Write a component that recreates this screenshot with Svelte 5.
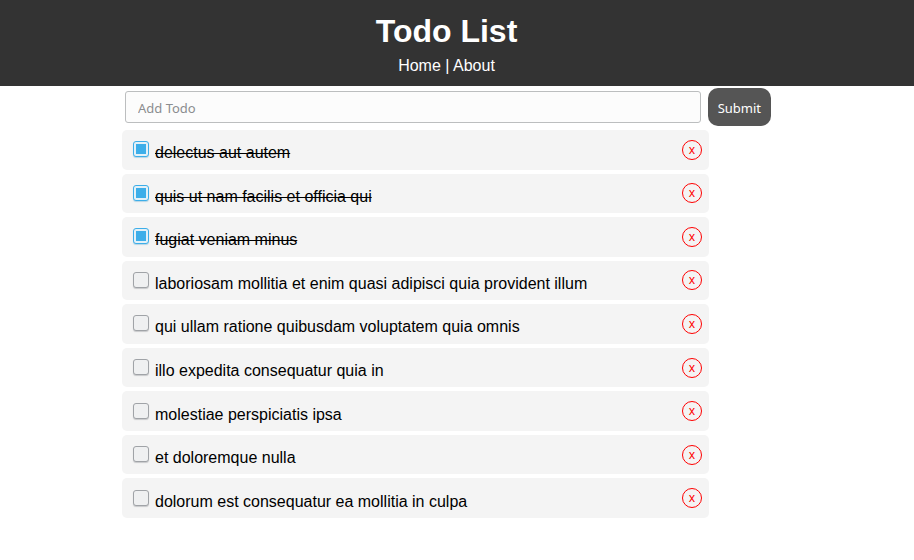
<script>
  let title = $state('');
  let nextId = 10;
  let todos = $state([
    { id: 1, title: 'delectus aut autem', completed: true },
    { id: 2, title: 'quis ut nam facilis et officia qui', completed: true },
    { id: 3, title: 'fugiat veniam minus', completed: true },
    { id: 4, title: 'laboriosam mollitia et enim quasi adipisci quia provident illum', completed: false },
    { id: 5, title: 'qui ullam ratione quibusdam voluptatem quia omnis', completed: false },
    { id: 6, title: 'illo expedita consequatur quia in', completed: false },
    { id: 7, title: 'molestiae perspiciatis ipsa', completed: false },
    { id: 8, title: 'et doloremque nulla', completed: false },
    { id: 9, title: 'dolorum est consequatur ea mollitia in culpa', completed: false }
  ]);

  function addTodo(event) {
    event.preventDefault();
    const text = title.trim();
    if (!text) return;
    todos.push({ id: nextId++, title: text, completed: false });
    title = '';
  }

  function removeTodo(id) {
    todos = todos.filter((todo) => todo.id !== id);
  }
</script>

<header>
  <h1>Todo List</h1>
  <nav><a href="#home">Home</a> | <a href="#about">About</a></nav>
</header>

<main>
  <form onsubmit={addTodo}>
    <input class="title" type="text" placeholder="Add Todo" aria-label="Add Todo" bind:value={title} />
    <button class="submit" type="submit">Submit</button>
  </form>

  <ul>
    {#each todos as todo (todo.id)}
      <li>
        <label class:done={todo.completed}>
          <input type="checkbox" bind:checked={todo.completed} />
          <span>{todo.title}</span>
        </label>
        <button class="remove" type="button" aria-label="x, delete {todo.title}" onclick={() => removeTodo(todo.id)}>x</button>
      </li>
    {/each}
  </ul>
</main>

<style>
  :global(body) {
    margin: 0;
    background: #fff;
    color: #000;
    font: 16px/22px "Liberation Sans", Arial, sans-serif;
  }

  header {
    padding: 8px 31px 8px 10px;
    background: #333;
    color: #fff;
    text-align: center;
  }

  h1 {
    margin: 0;
    font-size: 32px;
    line-height: 46px;
  }

  nav {
    line-height: 24px;
  }

  nav a {
    color: #fff;
    text-decoration: none;
  }

  main {
    max-width: 670px;
    margin: 0 auto;
  }

  form {
    display: flex;
    align-items: center;
    gap: 7px;
    padding: 2px 21px 4px 3px;
  }

  .title {
    flex: 1;
    min-width: 0;
    box-sizing: border-box;
    height: 32px;
    padding: 2px 12px 0;
    border: 1px solid #bcbebf;
    border-radius: 3px;
    background: #fcfcfc;
    color: #232629;
    font: 13px "Noto Sans", sans-serif;
  }

  .title::placeholder {
    color: #8b8d8f;
  }

  .submit {
    height: 38px;
    padding: 2px 10px 0;
    border: 0;
    border-radius: 10px;
    background: #555;
    color: #fff;
    font: 13px "Noto Sans", sans-serif;
    cursor: pointer;
  }

  ul {
    display: grid;
    grid-auto-rows: 1fr;
    gap: 4px;
    min-height: 388px;
    margin: 0 83px 0 0;
    padding: 0;
    list-style: none;
  }

  li {
    display: flex;
    align-items: center;
    justify-content: space-between;
    padding: 0 7px 0 11px;
    border-radius: 5px;
    background: #f4f4f4;
  }

  label {
    display: flex;
    align-items: flex-start;
    gap: 6px;
    padding-top: 3px;
  }

  label span {
    padding-top: 4px;
  }

  .done span {
    text-decoration: line-through;
  }

  input[type="checkbox"] {
    appearance: none;
    box-sizing: border-box;
    flex: none;
    width: 16px;
    height: 16px;
    margin: 3px 0 0;
    border: 1px solid #a0a3a7;
    border-radius: 3px;
    background: #eff0f1;
    box-shadow: 0 1px 1px #c8c9cb;
  }

  input[type="checkbox"]:checked {
    padding: 2px;
    border-color: #3daee9;
    background-color: #e4f1f8;
    background-image: linear-gradient(#3daee9, #3daee9);
    background-clip: content-box, border-box;
    background-origin: content-box;
    background-repeat: no-repeat;
    background-clip: border-box;
    box-shadow: 0 1px 1px #b5d5e6;
  }

  .remove {
    width: 20px;
    height: 20px;
    padding: 0;
    border: 1px solid #f00;
    border-radius: 50%;
    background: transparent;
    color: #f00;
    font: 12px/18px "Noto Sans", sans-serif;
    cursor: pointer;
  }
</style>
